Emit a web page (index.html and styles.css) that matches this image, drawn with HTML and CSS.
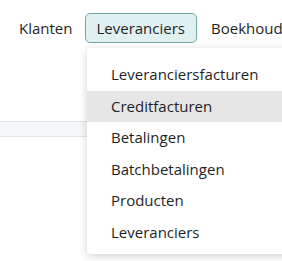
FILE: index.html
```html
<!DOCTYPE html>
<html lang="nl">
<head>
  <meta charset="UTF-8">
  <meta name="viewport" content="width=device-width, initial-scale=1.0">
  <title>Menu</title>
  <link rel="stylesheet" href="styles.css">
</head>
<body>
  <nav class="topnav">
    <a class="nav-item" href="#">Klanten</a>
    <a class="nav-item active" href="#">Leveranciers</a>
    <a class="nav-item" href="#">Boekhouding</a>
  </nav>

  <div class="band"></div>

  <ul class="dropdown">
    <li><a href="#">Leveranciersfacturen</a></li>
    <li class="hover"><a href="#">Creditfacturen</a></li>
    <li><a href="#">Betalingen</a></li>
    <li><a href="#">Batchbetalingen</a></li>
    <li><a href="#">Producten</a></li>
    <li><a href="#">Leveranciers</a></li>
  </ul>
</body>
</html>
```

FILE: styles.css
```css
body {
  font-family: "Open Sans", "Noto Sans", sans-serif;
  margin: 0;
  padding: 0;
  background-color: #fff;
  color: #1f1f1f;
  width: 282px;
  height: 261px;
  overflow: hidden;
  position: relative;
}

.topnav {
  display: flex;
  align-items: center;
  white-space: nowrap;
  height: 30px;
  padding: 13px 0 0 8px;
}

.nav-item {
  color: #1f1f1f;
  text-decoration: none;
  font-size: 15px;
  line-height: 20px;
  padding: 4px 10px;
  border: 1px solid transparent;
  border-radius: 5px;
  margin-right: 2px;
}

.active {
  background-color: #e1f1f2;
  border-color: #6fa8a9;
  padding: 4px 11px 4px 10px;
  margin-right: 3px;
}

.band {
  margin-top: 78px;
  height: 14px;
  background-color: #f6f7f8;
  border-top: 1px solid #e2e3e5;
  border-bottom: 1px solid #e2e3e5;
}

.dropdown {
  position: absolute;
  top: 48px;
  left: 87px;
  width: 230px;
  margin: 0;
  padding: 11px 0 5px;
  list-style: none;
  background: #fff;
  border-radius: 4px;
  box-shadow: 0 2px 8px rgba(0, 0, 0, 0.18);
}

.dropdown li a {
  display: block;
  padding: 0 24px;
  height: 31.6px;
  line-height: 31.6px;
  font-size: 15px;
  color: #1f1f1f;
  text-decoration: none;
}

.dropdown li.hover {
  background-color: #e6e6e6;
}
```
